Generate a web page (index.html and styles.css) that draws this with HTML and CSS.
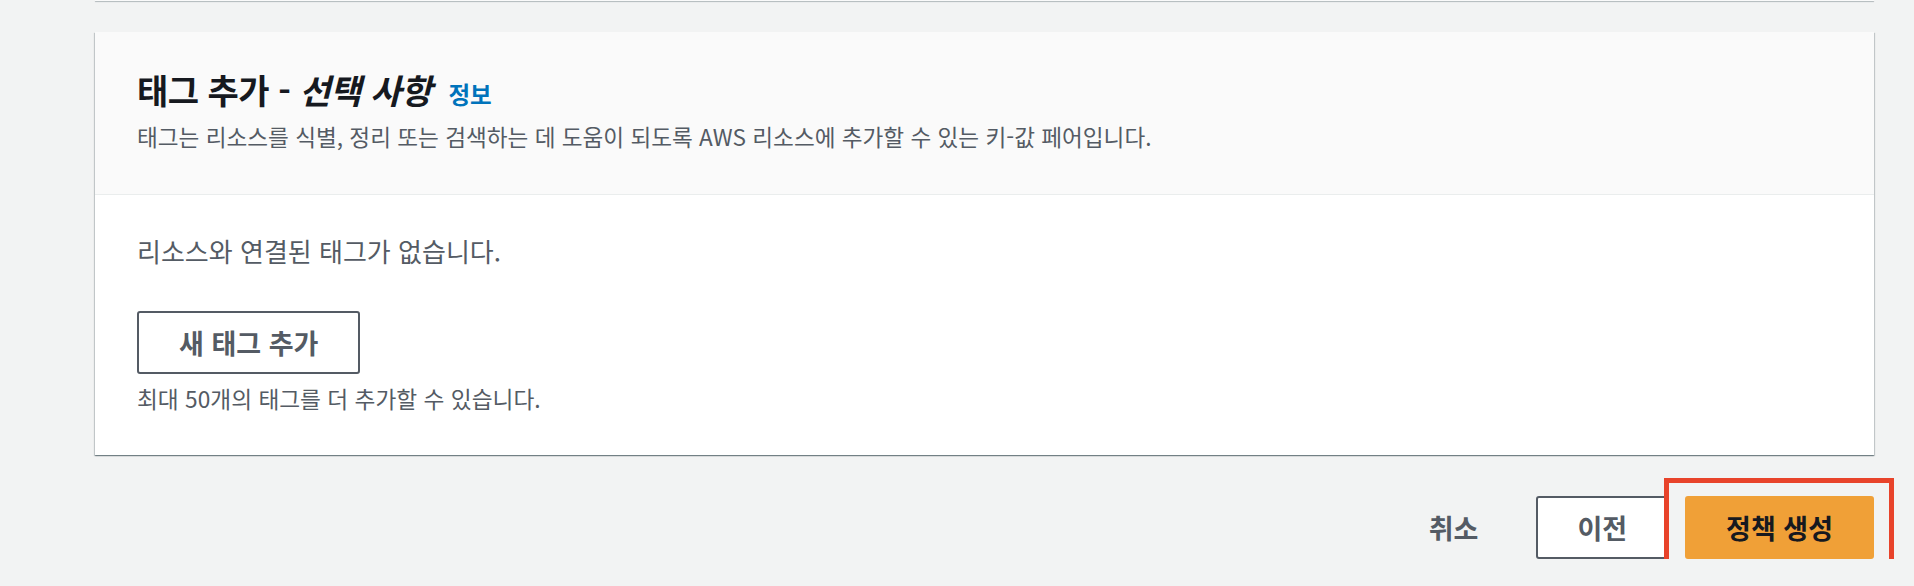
FILE: index.html
```html
<!DOCTYPE html>
<html lang="ko">
<head>
<meta charset="utf-8">
<title>태그 추가</title>
<link rel="stylesheet" href="styles.css">
</head>
<body>
<div class="page">
  <div class="prev-card"></div>
  <section class="card">
    <header class="card-header">
      <h2 class="title">태그 추가 - <em>선택 사항</em> <a class="info" href="#">정보</a></h2>
      <p class="desc">태그는 리소스를 식별, 정리 또는 검색하는 데 도움이 되도록 AWS 리소스에 추가할 수 있는 키-값 페어입니다.</p>
    </header>
    <div class="card-body">
      <p class="empty">리소스와 연결된 태그가 없습니다.</p>
      <button class="btn btn-normal add-btn" type="button">새 태그 추가</button>
      <p class="hint">최대 50개의 태그를 더 추가할 수 있습니다.</p>
    </div>
  </section>
  <div class="actions">
    <button class="btn btn-link" type="button">취소</button>
    <button class="btn btn-normal" type="button">이전</button>
    <div class="highlight">
      <button class="btn btn-primary" type="button">정책 생성</button>
    </div>
  </div>
</div>
</body>
</html>
```

FILE: styles.css
```css
html, body {
  margin: 0;
  padding: 0;
  background: #f2f3f3;
  font-family: "Noto Sans CJK KR", "Noto Sans", sans-serif;
  color: #16191f;
}

.page {
  padding: 0 40px 0 95px;
}

.prev-card {
  height: 1px;
  background: #fafafa;
  box-shadow: 0 1px 1px 0 rgba(0, 28, 36, 0.3);
}

.card {
  margin-top: 31px;
  background: #ffffff;
  box-shadow: 0 1px 1px 0 rgba(0, 28, 36, 0.35), 1px 1px 1px 0 rgba(0, 28, 36, 0.15), -1px 1px 1px 0 rgba(0, 28, 36, 0.15);
}

.card-header {
  background: #fafafa;
  border-bottom: 1px solid #eaeded;
  padding: 37px 42px 42px 42px;
}

.title {
  margin: 0;
  font-size: 34px;
  line-height: 42px;
  font-weight: 700;
  letter-spacing: -0.5px;
  color: #16191f;
}

.title em {
  font-style: italic;
}

.info {
  font-size: 23.5px;
  line-height: 1;
  font-weight: 700;
  letter-spacing: 0;
  color: #0073bb;
  text-decoration: none;
  margin-left: 8px;
}

.desc {
  margin: 11px 0 0;
  font-size: 22.6px;
  line-height: 30px;
  color: #545b64;
}

.card-body {
  padding: 39px 42px 41px 42px;
}

.empty {
  margin: 0;
  font-size: 26px;
  line-height: 34px;
  color: #545b64;
}

.hint {
  margin: 10px 0 0;
  font-size: 22.7px;
  line-height: 30px;
  color: #545b64;
}

.btn {
  font-family: "Noto Sans CJK KR", "Noto Sans", sans-serif;
  font-weight: 700;
  font-size: 27px;
  line-height: 1;
  height: 63px;
  margin: 0;
  padding: 0 39px;
  border-radius: 3px;
  border: 2px solid transparent;
  background: transparent;
  cursor: pointer;
  display: inline-flex;
  align-items: center;
  justify-content: center;
}

.btn-normal {
  background: #ffffff;
  border-color: #545b64;
  color: #545b64;
}

.add-btn {
  margin-top: 43px;
  padding: 0 40px;
}

.btn-link {
  color: #545b64;
}

.btn-primary {
  background: #f0a037;
  border-color: #f0a037;
  color: #16191f;
}

.actions {
  margin-top: 41px;
  height: 63px;
  display: flex;
  justify-content: flex-end;
  align-items: flex-start;
  gap: 17px;
}

.highlight {
  display: flex;
  align-items: flex-start;
  box-sizing: border-box;
  height: 98px;
  padding: 13px 15px 0 16px;
  border: 5px solid #e8432a;
  margin: -18px -20px 0 -21px;
}
```
